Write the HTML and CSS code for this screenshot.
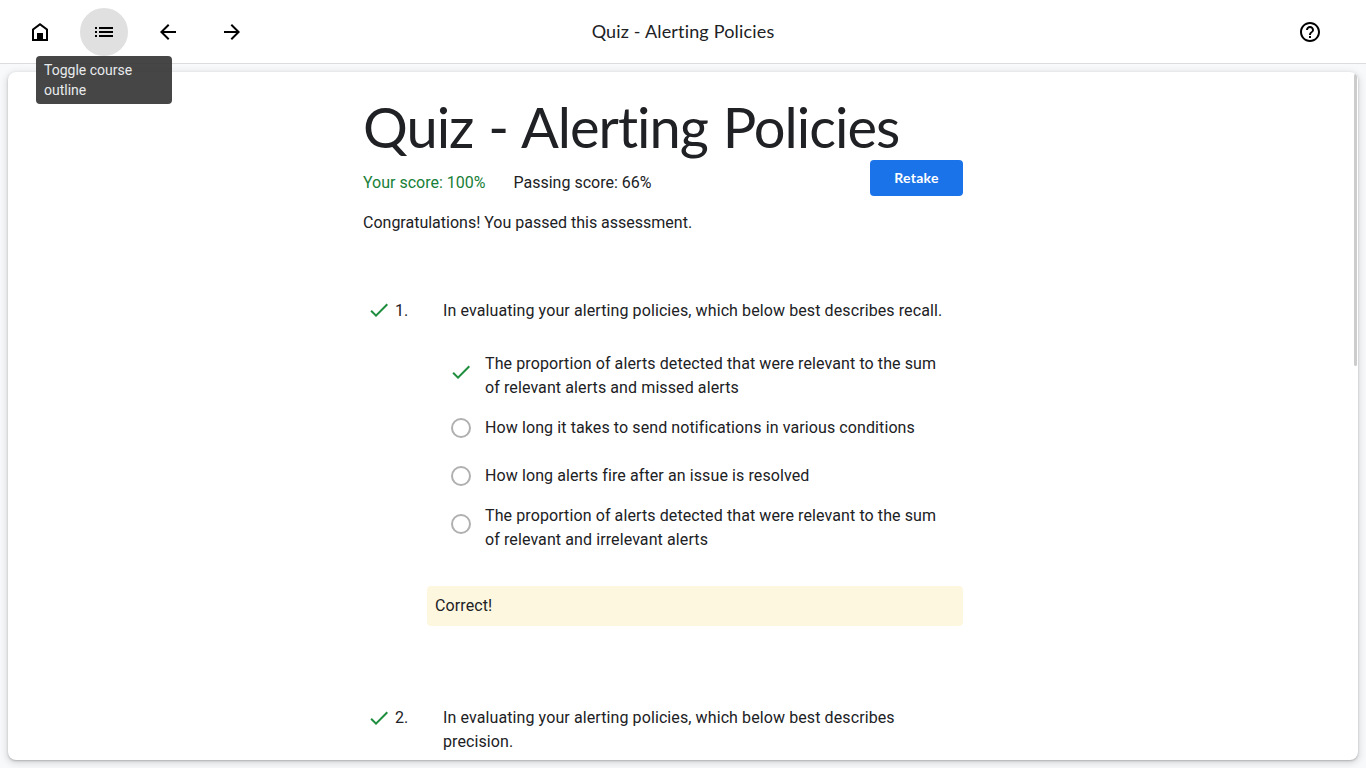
FILE: index.html
```html
<!DOCTYPE html>
<html lang="en">
<head>
<meta charset="utf-8">
<title>Quiz - Alerting Policies</title>
<link rel="stylesheet" href="styles.css">
</head>
<body>
<header class="toolbar">
  <nav class="toolbar-nav">
    <button class="icon-button" aria-label="Home"><svg viewBox="0 0 24 24"><path fill-rule="evenodd" d="M12 3 4 9v12h16V9zm0 2.500 6 4.500v9h-3v-6H9v6H6v-9z"/></svg></button>
    <button class="icon-button is-active" aria-label="Toggle course outline"><svg viewBox="0 0 24 24"><path d="M3 7h2v2H3zm0 4h2v2H3zm0 4h2v2H3zm4-8h14v2H7zm0 4h14v2H7zm0 4h14v2H7z"/></svg><span class="tooltip">Toggle course outline</span></button>
    <button class="icon-button" aria-label="Previous"><svg viewBox="0 0 24 24"><path d="M20 11H7.830l5.590-5.590L12 4l-8 8 8 8 1.410-1.410L7.830 13H20z"/></svg></button>
    <button class="icon-button" aria-label="Next"><svg viewBox="0 0 24 24"><path d="m12 4-1.410 1.410L16.170 11H4v2h12.170l-5.580 5.590L12 20l8-8z"/></svg></button>
  </nav>
  <div class="toolbar-title">Quiz - Alerting Policies</div>
  <button class="icon-button help" aria-label="Help"><svg viewBox="0 0 24 24"><path d="M11 18h2v-2h-2zm1-16C6.480 2 2 6.480 2 12s4.480 10 10 10 10-4.480 10-10S17.520 2 12 2m0 18c-4.410 0-8-3.590-8-8s3.590-8 8-8 8 3.590 8 8-3.590 8-8 8m0-14c-2.210 0-4 1.790-4 4h2c0-1.100.9-2 2-2s2 .9 2 2c0 2-3 1.750-3 5h2c0-2.250 3-2.500 3-5 0-2.210-1.790-4-4-4"/></svg></button>
</header>
<main class="card">
  <div class="scrollbar"></div>
  <div class="quiz">
    <h1 class="quiz-title">Quiz - Alerting Policies</h1>
    <div class="scores">
      <span class="score">Your score: 100%</span>
      <span>Passing score: 66%</span>
      <button class="retake">Retake</button>
    </div>
    <p class="result">Congratulations! You passed this assessment.</p>
    <section class="question">
      <div class="question-head">
        <svg class="check check-first" viewBox="0 0 24 24"><path d="M9 16.170 4.830 12l-1.420 1.410L9 19 21 7l-1.410-1.410z"/></svg>
        <span class="number">1.</span>
        <p class="prompt">In evaluating your alerting policies, which below best describes recall.</p>
      </div>
      <ul class="options">
        <li class="option option-tall"><svg class="check" viewBox="0 0 24 24"><path d="M9 16.170 4.830 12l-1.420 1.410L9 19 21 7l-1.410-1.410z"/></svg><span>The proportion of alerts detected that were relevant to the sum of relevant alerts and missed alerts</span></li>
        <li class="option"><i class="radio"></i><span>How long it takes to send notifications in various conditions</span></li>
        <li class="option"><i class="radio"></i><span>How long alerts fire after an issue is resolved</span></li>
        <li class="option"><i class="radio"></i><span>The proportion of alerts detected that were relevant to the sum of relevant and irrelevant alerts</span></li>
      </ul>
      <div class="feedback">Correct!</div>
    </section>
    <section class="question">
      <div class="question-head">
        <svg class="check" viewBox="0 0 24 24"><path d="M9 16.170 4.830 12l-1.420 1.410L9 19 21 7l-1.410-1.410z"/></svg>
        <span class="number">2.</span>
        <p class="prompt">In evaluating your alerting policies, which below best describes precision.</p>
      </div>
    </section>
  </div>
</main>
</body>
</html>
```
FILE: styles.css
```css
* { box-sizing: border-box; }
body {
  margin: 0;
  height: 100vh;
  overflow: hidden;
  display: flex;
  flex-direction: column;
  background: #f8f9fa;
  color: #202124;
  font: 16px/24px Roboto, sans-serif;
}
h1, p, ul { margin: 0; padding: 0; }
button { border: 0; font: inherit; }
svg { display: block; width: 24px; height: 24px; }
.toolbar {
  flex: none;
  height: 64px;
  padding: 0 32px 0 16px;
  display: grid;
  grid-template-columns: 1fr auto 1fr;
  align-items: center;
  background: #fff;
  border-bottom: 1px solid #dadce0;
}
.toolbar-nav { display: flex; gap: 16px; }
.icon-button {
  position: relative;
  width: 48px;
  height: 48px;
  padding: 12px;
  border-radius: 50%;
  background: transparent;
}
.is-active { background: #e0e0e0; z-index: 2; }
.tooltip {
  position: absolute;
  left: -44px;
  top: 48px;
  width: 136px;
  height: 48px;
  padding: 4px 8px;
  border-radius: 4px;
  background: rgba(50, 50, 50, .9);
  color: #e8eaed;
  font-size: 14px;
  line-height: 20px;
  text-align: left;
}
.toolbar-title {
  margin: 0 0 2px 16px;
  font: 18px/24px Lato, sans-serif;
  letter-spacing: .17px;
}
.help { justify-self: end; }
.card {
  position: relative;
  flex: 1;
  min-height: 0;
  margin: 8px;
  overflow: hidden;
  background: #fff;
  border-radius: 8px;
  box-shadow: 0 1px 2px rgba(60, 64, 67, .3), 0 2px 6px 2px rgba(60, 64, 67, .15);
}
.scrollbar {
  position: absolute;
  top: 2px;
  right: 1px;
  width: 3px;
  height: 292px;
  border-radius: 2px;
  background: #ccc;
}
.quiz { width: 600px; margin-left: 355px; padding-top: 23px; }
.quiz-title {
  font: 400 56px/64px Lato, sans-serif;
  letter-spacing: -1px;
  word-spacing: 1.5px;
  white-space: nowrap;
}
.scores { display: flex; gap: 28px; height: 36px; align-items: center; margin-top: 6px; }
.score { color: #188038; }
.retake {
  align-self: flex-start;
  width: 93px;
  height: 36px;
  margin: -5px 0 0 auto;
  padding: 0;
  border-radius: 4px;
  background: #1a73e8;
  color: #fff;
  font: 700 14px/36px Lato, sans-serif;
  letter-spacing: .3px;
}
.result { margin-top: 10px; }
.question { margin-top: 64px; letter-spacing: .1px; }
.question + .question { margin-top: 80px; }
.question-head { display: flex; padding-left: 4px; }
.check { flex: none; fill: #1e8e3e; }
.check-first { margin-top: -1px; }
.number { flex: none; width: 48px; margin-left: 4px; }
.options { list-style: none; padding-left: 88px; margin-top: 29px; }
.option { display: flex; align-items: center; gap: 14px; min-height: 48px; width: 488px; }
.option-tall { align-items: flex-start; height: 52px; gap: 12px; }
.option-tall .check { margin: 8px 0 0 -2px; }
.radio { flex: none; width: 20px; height: 20px; border: 2px solid #b0b0b0; border-radius: 50%; }
.option:last-child { align-items: flex-start; margin-top: 4px; }
.option:last-child .radio { margin-top: 10px; }
.feedback {
  height: 40px;
  margin: 34px 0 0 64px;
  padding: 8px;
  background: #fef7e0;
  border-radius: 4px;
}
```
